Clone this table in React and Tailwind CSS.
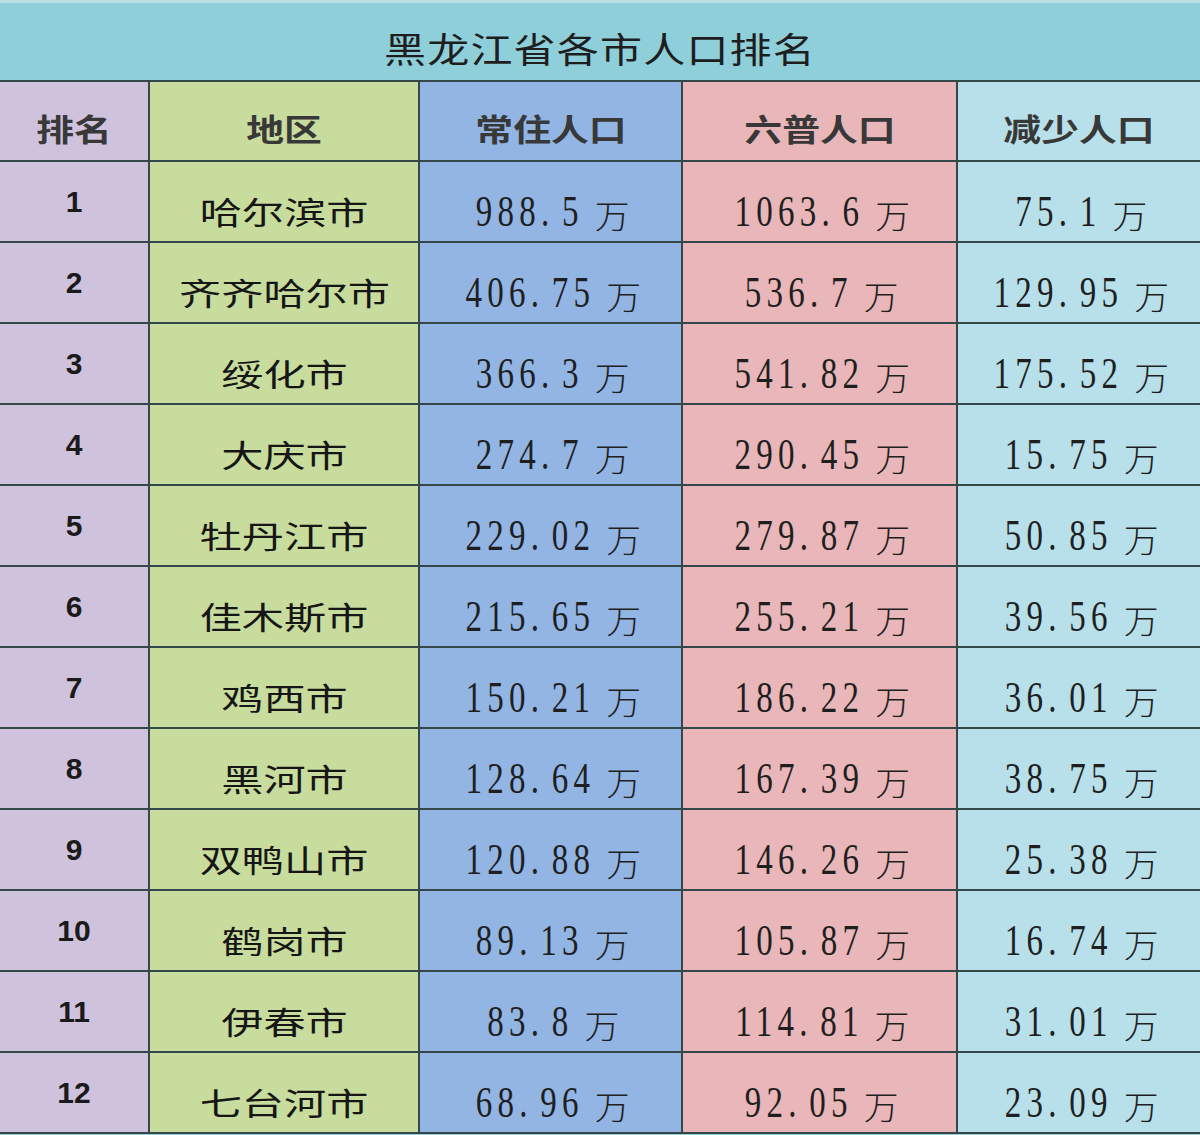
import React from "react";

const rows = [
  ["1", "哈尔滨市", "988.5", "1063.6", "75.1"],
  ["2", "齐齐哈尔市", "406.75", "536.7", "129.95"],
  ["3", "绥化市", "366.3", "541.82", "175.52"],
  ["4", "大庆市", "274.7", "290.45", "15.75"],
  ["5", "牡丹江市", "229.02", "279.87", "50.85"],
  ["6", "佳木斯市", "215.65", "255.21", "39.56"],
  ["7", "鸡西市", "150.21", "186.22", "36.01"],
  ["8", "黑河市", "128.64", "167.39", "38.75"],
  ["9", "双鸭山市", "120.88", "146.26", "25.38"],
  ["10", "鹤岗市", "89.13", "105.87", "16.74"],
  ["11", "伊春市", "83.8", "114.81", "31.01"],
  ["12", "七台河市", "68.96", "92.05", "23.09"],
];

const cjk = "font-['Noto_Sans_CJK_SC',sans-serif]";
const colBg = ["bg-[#cfc2dd]", "bg-[#c8dc9d]", "bg-[#92b5e4]", "bg-[#e9b6b9]", "bg-[#b8e0ea]"];
const headers = ["排名", "地区", "常住人口", "六普人口", "减少人口"];

// condensed serif digits with wide spacing, like the song-style figures in the picture
const Num = ({ value }) => {
  const [whole, frac] = value.split(".");
  return (
    <span className="inline-block scale-x-[0.75] font-['Liberation_Serif',serif] text-[44px] leading-none tracking-[7px] text-[#1f1f1f]">
      {whole}
      <span className="mr-[10px]">.</span>
      {frac}
      <span className={`${cjk} inline-block ml-[22px] text-[32px] font-light tracking-normal scale-x-[1.45] translate-y-[2px]`}>万</span>
    </span>
  );
};

export default function App() {
  return (
    <div className="w-[1200px] h-[1135px] bg-[#8ecfda] overflow-hidden">
      {/* title */}
      <div className="h-[82px] border-t-[3px] border-t-[#bcdfe5] border-b-2 border-b-[#34484a] flex items-center justify-center pt-[14px]">
        <span className={`${cjk} inline-block text-[35px] text-[#1e1e1e] tracking-[1px] scale-x-[1.2]`}>
          黑龙江省各市人口排名
        </span>
      </div>

      <div className="grid grid-cols-[150px_270px_263px_275px_242px]">
        {headers.map((h, i) => (
          <div
            key={h}
            className={`h-[80px] border-b-2 border-[#34484a] ${i < 4 ? "border-r-2" : ""} ${colBg[i]} flex items-center justify-center pt-[14px]`}
          >
            <span className={`${cjk} inline-block text-[31px] font-bold text-[#383838] scale-x-[1.22]`}>{h}</span>
          </div>
        ))}

        {rows.map((r) => (
          <React.Fragment key={r[0]}>
            <div className={`h-[81px] border-b-2 border-r-2 border-[#34484a] ${colBg[0]} flex items-center justify-center`}>
              <span className="font-['Liberation_Sans',sans-serif] font-bold text-[30px] text-[#1a1a1a]">{r[0]}</span>
            </div>
            <div className={`h-[81px] border-b-2 border-r-2 border-[#34484a] ${colBg[1]} flex items-center justify-center pt-[20px]`}>
              <span className={`${cjk} inline-block text-[31px] font-normal text-[#161616] scale-x-[1.36]`}>{r[1]}</span>
            </div>
            <div className={`h-[81px] border-b-2 border-r-2 border-[#34484a] ${colBg[2]} flex items-center justify-center pt-[20px]`}>
              <Num value={r[2]} />
            </div>
            <div className={`h-[81px] border-b-2 border-r-2 border-[#34484a] ${colBg[3]} flex items-center justify-center pt-[20px]`}>
              <Num value={r[3]} />
            </div>
            <div className={`h-[81px] border-b-2 border-[#34484a] ${colBg[4]} flex items-center justify-center pt-[20px]`}>
              <Num value={r[4]} />
            </div>
          </React.Fragment>
        ))}
      </div>
    </div>
  );
}
